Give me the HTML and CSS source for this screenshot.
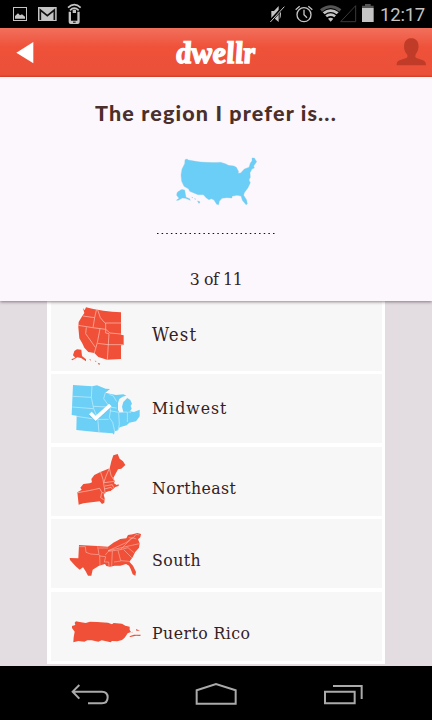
FILE: index.html
```html
<!DOCTYPE html>
<html lang="en">
<head>
<meta charset="utf-8">
<title>dwellr</title>
<link rel="stylesheet" href="styles.css">
</head>
<body>
<div class="status">
  <svg width="90" height="28" viewBox="0 0 270 84" fill="#c4c4c4">
    <path fill-rule="evenodd" d="M39 21H81V63H39ZM42 24V60H78V24Z"/>
    <path d="M45 56V48L54 40L60 46L66 43L75 50V56Z"/>
    <path d="M114 21H170V63H114Z"/>
    <path d="M121 60V30L142 47L163 30V60" fill="none" stroke="#111" stroke-width="5"/>
    <path d="M206 35H213V62H232V35H239V66Q239 72 233 72H212Q206 72 206 66ZM218 30Q223 27 228 30V39H218Z"/>
    <path d="M204 23Q223 5 242 23M210 31Q223 18 236 31" fill="none" stroke="#c4c4c4" stroke-width="5"/>
    <path d="M219 65H227V68H219Z" fill="#000"/>
  </svg>
  <svg class="status-right" width="112" height="28" viewBox="150 0 336 84" fill="#c4c4c4">
    <path d="M166 33H174L188 18V66L174 54H166ZM191 27Q199 42 191 58Z"/>
    <path d="M163 64L205 18" stroke="#000" stroke-width="9"/>
    <path d="M163 66L205 20" stroke="#c4c4c4" stroke-width="3"/>
    <g fill="none" stroke="#c4c4c4" stroke-width="4">
      <circle cx="264" cy="44" r="21"/><path d="M264 29V44L273 53M239 29L251 19M277 19L289 29"/>
    </g>
    <path d="M312 28Q344 3 376 28L370 35Q344 13 318 35Z" fill="#555"/>
    <path d="M320 37Q344 18 368 37L362 43Q344 29 326 43ZM328 46Q344 34 360 46L355 52Q344 44 333 52ZM336 56Q344 50 352 56L344 65Z"/>
    <path d="M374 65H419V17Z" fill="none" stroke="#444" stroke-width="2.5"/>
    <path d="M438 24H473V66H438Z"/><path d="M438 17H447V12H464V17H473V24H438Z" fill="#555"/>
  </svg>
  <span class="clock">12:17</span>
</div>
<header class="bar">
  <svg width="60" height="49" viewBox="0 84 180 147"><path d="M49 158L100 126V190Z" fill="#fff"/></svg>
  <h1 class="logo">dwellr</h1>
  <svg width="60" height="49" viewBox="468 84 180 147"><path d="M542 196Q541 184 551 181L571 174Q577 171 573 163C564 153 563 140 565 132C568 109 604 109 607 132C609 143 606 155 599 163Q596 171 601 174L621 181Q630 184 630 196Z" fill="#c03c28"/></svg>
</header>
<section class="question">
  <h2 class="title">The region I prefer is...</h2>
  <svg class="usa" width="88" height="54" viewBox="99 30 264 162" fill="#6bcef7" stroke="#8cc9e3" stroke-width="1">
    <path d="M135 44L141 42L145 45Q190 55 242 52L258 57L265 61L282 63L289 67L296 80L294 85L302 84L313 72L327 67L331 54L336 48L336 39L343 39L350 50L341 63L343 69L336 72L330 83L331 97L327 105L331 113L324 128L313 143L311 151L320 165L322 177L318 179L307 166L303 153L291 151L276 154L276 159L260 158L246 160L238 169L236 179L230 178L222 165L214 161L207 164L199 159L190 149L174 149L149 139L146 132L132 124L125 109L123 90L126 72L134 56Z"/>
    <path d="M110 151Q109 140 119 137Q124 131 134 135L138 157L149 161L151 166L136 160L127 159L115 166H109L117 160Z"/>
    <path d="M155 157L159 158M163 161L168 163M173 168L180 171L177 175Z" stroke-width="2"/>
  </svg>
  <svg class="dots" width="120" height="2" viewBox="0 0 120 2"><path d="M1 .5H120" stroke="#1c0e0c" stroke-width="1" stroke-dasharray="1.5 3.14"/></svg>
  <p class="step">3 of 11</p>
</section>
<main class="list">
  <div class="row high">
    <svg viewBox="33 18 303 207">
      <path class="red" d="M129 39L134 46L138 37Q190 51 243 52V119L251 121V150L243 151V192L201 194L175 186L163 174L145 171L133 158L126 143L118 130L115 97L116 81L125 66L133 54Z"/>
      <path class="line" d="M129 63L164 68L170 41M172 42L181 68L192 81L196 84H244M115 91L158 98L197 103L210 114L243 117M164 68L159 98M197 84V114L207 116L202 194M180 101L172 143L163 174M139 97L137 116L166 157M173 145L204 149H250"/>
      <path class="red" d="M103 168L111 163L124 164L126 183L138 193L138 199L123 189L112 187L97 196L94 193L106 188L99 181ZM148 192L153 194L151 197ZM164 197L169 198L168 201ZM173 203L181 206L177 210Z"/>
    </svg><span class="loosest">West</span>
  </div>
  <div class="row high wide-gap">
    <svg viewBox="-27 12 303 207">
      <path class="blue" d="M39 45L96 49L111 46L137 56L150 57L136 68L153 72L168 75L190 73L199 77L188 80L178 87L174 99L174 120L178 127L190 126L186 110L190 96L202 84L211 90L216 101L212 107L215 116L210 124L222 126L239 119V139L228 154L208 158L200 166L179 172L174 181L164 184L162 194L158 190L115 187L49 180L50 137L35 135Z"/>
      <path class="line" d="M38 79L94 82M37 111L100 116M50 139L115 149M96 49L94 82L101 116L113 144L117 187M100 109L144 111M136 68L131 86L145 105L152 119L148 143L158 157L164 184M110 148H146M146 111L170 114M149 122L176 127L178 164L174 181M177 127L202 126V156M148 73L160 78L170 95M205 126L213 127"/>
      <path d="M87 137L95 128L107 138L147 101L155 109L107 155Z" fill="#5ab6dd" opacity=".65"/>
      <path d="M87 133L95 125L107 137L147 101L155 109L107 153Z" fill="#fff"/>
    </svg><span class="loose">Midwest</span>
  </div>
  <div class="row">
    <svg viewBox="-27 6 303 207">
      <path class="red" d="M52 142L65 134L61 128L70 117L89 115L96 112L94 102L103 90L121 81L149 70L154 49L160 31L173 27L179 41L189 49L196 60L184 71L174 73L160 99L165 110L161 114L170 120L176 118V123L166 126L157 134L137 142L131 149L134 160L133 173L126 177L119 169L70 175L56 179Z"/>
      <path class="line" d="M53 143Q90 137 119 130L126 143L137 145M121 79L129 103L135 141M148 70L137 96L132 112M148 69L153 91L164 109L132 113M135 123L157 119L161 128M133 132L153 127L158 134M125 143L122 158L131 164"/>
      <path d="M139 139L156 133L152 138Z" fill="#ef5037"/>
    </svg><span>Northeast</span>
  </div>
  <div class="row wide-gap">
    <svg viewBox="-27 -3 303 207">
      <path class="red" d="M57 75L111 78L144 80L160 68L181 57L199 55L204 45L218 43L232 39L243 42L241 52L234 58L239 70L237 83L225 97L218 112L208 125L219 137L228 156L226 167L218 163L212 147L207 137L198 132L181 137H164L150 140L139 138L135 132L117 137L98 149L94 167L84 167L77 154L69 142L59 149L47 139L30 120L29 114L55 115Z"/>
      <path class="line thin" d="M57 80H76L78 97L92 102L117 104L113 79M116 84H144M144 92L238 71M119 105L120 137M136 105L145 94L181 89L204 66L217 54M119 108L137 110L133 126H146L147 138M157 93L155 137M174 91L182 122L207 124M162 126L182 123M191 89L215 113M181 89L204 83L222 98M145 92L198 68L217 53L229 57M206 53L219 55L228 43L238 45"/>
    </svg><span>South</span>
  </div>
  <div class="row">
    <svg viewBox="33 6 303 207">
      <path class="red" d="M108 94L119 96L137 99L150 95L171 96L204 98L216 103L221 99L246 101L256 107L269 110V120L273 126L263 130L254 143L246 150L232 154L216 153L212 157L199 154L185 151L175 155L155 151L142 151L133 155L115 153L100 157L101 142L104 125L96 114L96 108L106 105L104 98Z"/>
      <path class="red" d="M288 117L300 122L289 122ZM268 139L282 134L302 134L301 138L288 137L271 141ZM272 128L278 125V127Z"/>
    </svg><span>Puerto Rico</span>
  </div>
</main>
<nav class="nav">
  <svg width="432" height="54" viewBox="-150 3 1296 162" fill="none" stroke="#aaa" stroke-width="6">
    <path d="M68 80H156Q173 80 173 97Q173 115 156 115H114M88 60L68 80L88 101"/>
    <path d="M440 116V76L498 57L557 76V116Z"/>
    <path d="M825 80H914V115H825ZM849 63H935V102"/>
  </svg>
</nav>
</body>
</html>
```
FILE: styles.css
```css
* { box-sizing: border-box; }
body {
  margin: 0;
  width: 432px;
  height: 720px;
  overflow: hidden;
  display: flex;
  flex-direction: column;
  background: #e3dde1;
  color: #35211e;
}
svg { display: block; flex: none; }
h1, h2, p { margin: 0; font-weight: normal; white-space: nowrap; }

.status {
  flex: none;
  height: 28px;
  display: flex;
  background: #000;
}
.status-right { margin-left: auto; }
.clock {
  width: 54px;
  padding-left: 2px;
  font: 18.5px/30px Roboto, sans-serif;
  letter-spacing: -.2px;
  color: #c4c4c4;
}

.bar {
  flex: none;
  height: 49px;
  display: flex;
  justify-content: space-between;
  background: linear-gradient(#f1705c, #ef5139 40%, #eb5038 96%, #e43e21);
}
.logo {
  font: italic bold 31px/50px "Liberation Serif", serif;
  color: #fff;
  -webkit-text-stroke: 1.3px #fff;
  transform: skewX(6deg);
}

.question {
  flex: none;
  height: 224px;
  display: flex;
  flex-direction: column;
  align-items: center;
  background: #fcf7fc;
  box-shadow: 0 1px 3px rgba(70, 55, 65, .6);
  z-index: 1;
}
.title {
  margin-top: 21px;
  font: 900 21.5px/30px Lato, sans-serif;
  letter-spacing: 1.15px;
  color: #4a2f2b;
}
.usa { margin: 27px 0 0 2px; }
.dots { margin-top: 24px; }
.step {
  margin-top: 32px;
  font: 17.5px/24px "DejaVu Serif Condensed", "DejaVu Serif", serif;
  letter-spacing: -.4px;
}

.list {
  flex: none;
  width: 338px;
  height: 363px;
  margin: 0 auto;
  display: grid;
  grid-template-rows: 73px 73px 72px 73px 72px;
  padding: 0 3px 0 4px;
  background: #fff;
}
.row {
  display: flex;
  background: #f7f7f7;
  border-bottom: 3px solid #fff;
}
.wide-gap { border-bottom-width: 4px; }
.row svg { width: 101px; height: 69px; }
.row span {
  padding-top: 29px;
  font: 17.5px/24px "DejaVu Serif Condensed", "DejaVu Serif", serif;
  letter-spacing: .45px;
}
.row .loose { letter-spacing: 1px; }
.row .loosest { font-size: 18.5px; letter-spacing: 1.2px; }
.high span { padding-top: 22px; }
.red { fill: #ef5037; }
.blue { fill: #6bcff6; }
.line { fill: none; stroke: #fbc5bb; stroke-width: 2; stroke-linejoin: round; }
.thin { stroke-width: 1.6; }
.blue + .line { stroke: #cceffc; }

.nav {
  height: 54px;
  margin-top: 2px;
  background: #000;
}
```
